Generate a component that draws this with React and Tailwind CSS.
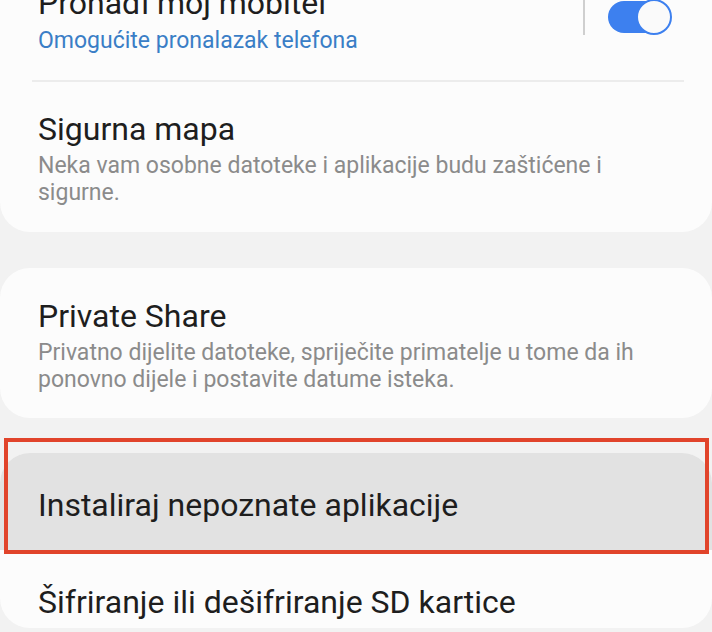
const font = { fontFamily: 'Roboto, "Noto Sans", sans-serif' };

const Title = ({ children }) => (
  <div className="text-[32px] leading-[38px] text-[#1e1e1e] whitespace-nowrap">{children}</div>
);

const Desc = ({ children }) => (
  <div className="mt-[4px] text-[23px] leading-[27px] text-[#8b8b8b]">{children}</div>
);

const Toggle = () => (
  <div className="relative w-[64px] h-[36px]">
    <div className="absolute left-0 top-[2px] w-[62px] h-[32px] rounded-full bg-[#3d80ef]" />
    <div className="absolute right-0 top-0 w-[36px] h-[36px] rounded-full bg-[#fafafa] border-2 border-[#3d80ef]" />
  </div>
);

export default function App() {
  return (
    <div className="w-[712px] h-[632px] overflow-hidden bg-[#f2f2f2]" style={font}>
      {/* Find my mobile + Secure folder */}
      <div className="-mt-[16px] bg-[#fcfcfc] rounded-b-[30px] pb-[26px]">
        <div className="flex items-start pl-[38px] pr-[40px]">
          <div className="flex-1">
            <Title>Pronađi moj mobitel</Title>
            <div className="mt-[5px] text-[23px] leading-[27px] text-[#3a7ec6]">
              Omogućite pronalazak telefona
            </div>
          </div>
          <div className="flex items-center mt-[15px] gap-[23px]">
            <div className="w-[2px] h-[36px] bg-[#cfcfcf]" />
            <Toggle />
          </div>
        </div>
        <div className="mt-[26px] ml-[32px] mr-[28px] h-[2px] bg-[#ececec]" />
        <div className="mt-[28px] pl-[38px] pr-[40px]">
          <Title>Sigurna mapa</Title>
          <Desc>Neka vam osobne datoteke i aplikacije budu zaštićene i sigurne.</Desc>
        </div>
      </div>

      {/* Private Share */}
      <div className="mt-[36px] bg-[#fcfcfc] rounded-[30px] pt-[29px] pb-[25px] pl-[38px] pr-[40px]">
        <Title>Private Share</Title>
        <Desc>Privatno dijelite datoteke, spriječite primatelje u tome da ih ponovno dijele i postavite datume isteka.</Desc>
      </div>

      {/* Unknown apps + SD card */}
      <div className="relative mt-[35px] bg-[#fcfcfc] rounded-[30px]">
        <div className="h-[97px] bg-[#e2e2e2] rounded-t-[30px] pt-[33px] pl-[38px]">
          <Title>Instaliraj nepoznate aplikacije</Title>
        </div>
        <div className="h-[78px] pt-[33px] pl-[38px]">
          <Title>Šifriranje ili dešifriranje SD kartice</Title>
        </div>
        <div className="absolute left-[4px] top-[-15px] w-[705px] h-[116px] border-4 border-[#e1442b]" />
      </div>
    </div>
  );
}
